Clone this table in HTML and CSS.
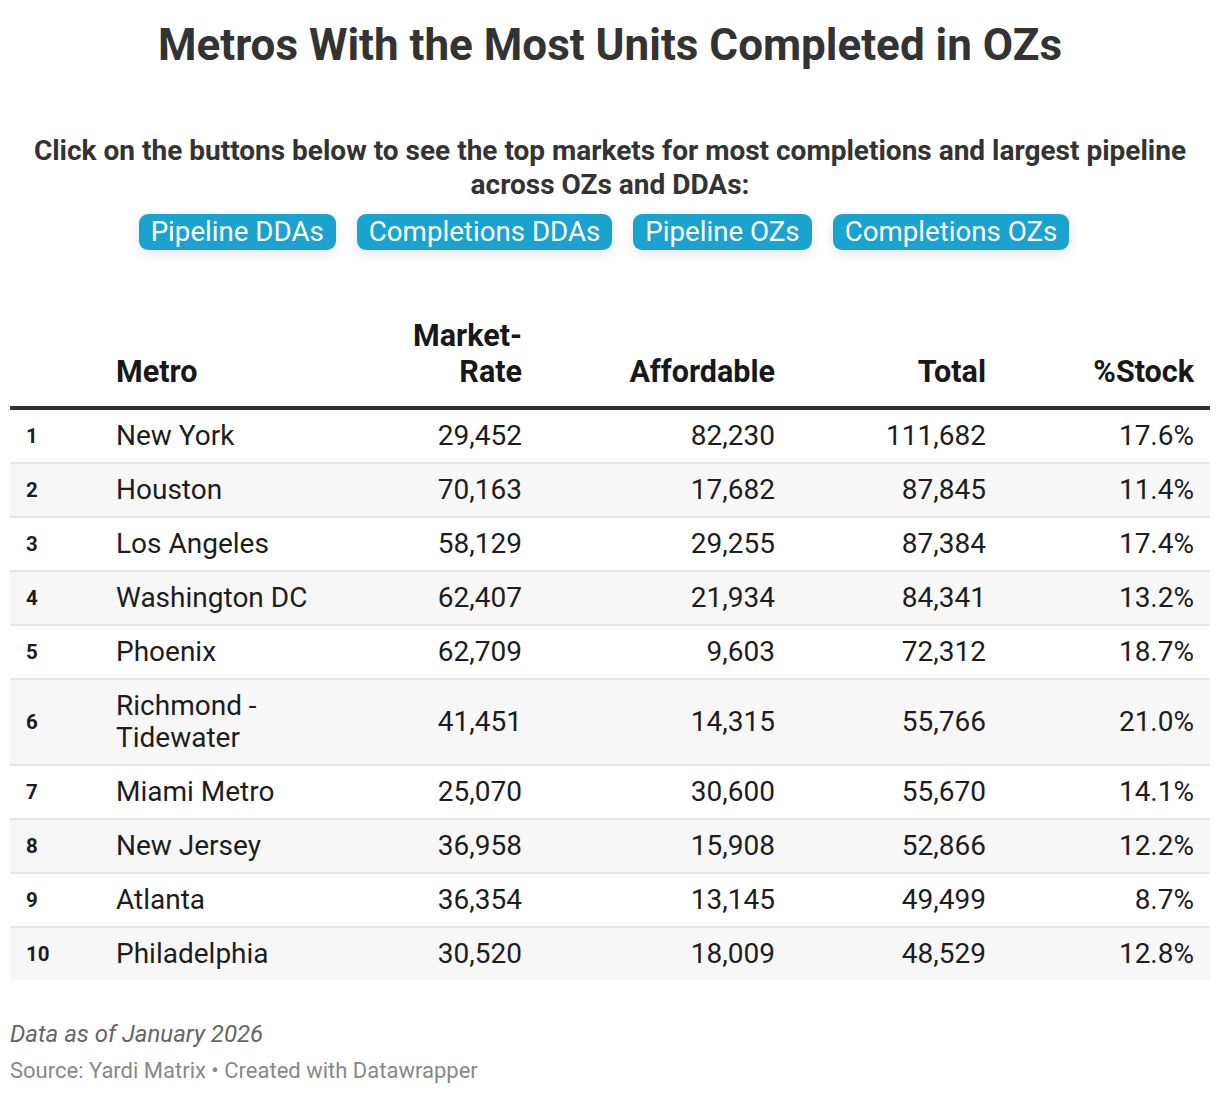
FILE: index.html
```html
<!DOCTYPE html>
<html>
<head>
<meta charset="utf-8">
<link rel="stylesheet" href="styles.css">
</head>
<body>
<div class="chart">
  <h1 class="title">Metros With the Most Units Completed in OZs</h1>
  <p class="desc">Click on the buttons below to see the top markets for most completions and largest pipeline across OZs and DDAs:</p>
  <div class="buttons">
    <span class="btn">Pipeline DDAs</span>
    <span class="btn">Completions DDAs</span>
    <span class="btn">Pipeline OZs</span>
    <span class="btn">Completions OZs</span>
  </div>
  <table class="tbl">
    <colgroup>
      <col class="c-rank"><col class="c-metro"><col class="c-mr"><col class="c-aff"><col class="c-tot"><col class="c-pct">
    </colgroup>
    <thead>
      <tr>
        <th></th>
        <th class="l">Metro</th>
        <th class="r">Market-Rate</th>
        <th class="r">Affordable</th>
        <th class="r">Total</th>
        <th class="r">%Stock</th>
      </tr>
    </thead>
    <tbody>
      <tr><td class="rank">1</td><td>New York</td><td class="r">29,452</td><td class="r">82,230</td><td class="r">111,682</td><td class="r">17.6%</td></tr>
      <tr><td class="rank">2</td><td>Houston</td><td class="r">70,163</td><td class="r">17,682</td><td class="r">87,845</td><td class="r">11.4%</td></tr>
      <tr><td class="rank">3</td><td>Los Angeles</td><td class="r">58,129</td><td class="r">29,255</td><td class="r">87,384</td><td class="r">17.4%</td></tr>
      <tr><td class="rank">4</td><td>Washington DC</td><td class="r">62,407</td><td class="r">21,934</td><td class="r">84,341</td><td class="r">13.2%</td></tr>
      <tr><td class="rank">5</td><td>Phoenix</td><td class="r">62,709</td><td class="r">9,603</td><td class="r">72,312</td><td class="r">18.7%</td></tr>
      <tr><td class="rank">6</td><td>Richmond - Tidewater</td><td class="r">41,451</td><td class="r">14,315</td><td class="r">55,766</td><td class="r">21.0%</td></tr>
      <tr><td class="rank">7</td><td>Miami Metro</td><td class="r">25,070</td><td class="r">30,600</td><td class="r">55,670</td><td class="r">14.1%</td></tr>
      <tr><td class="rank">8</td><td>New Jersey</td><td class="r">36,958</td><td class="r">15,908</td><td class="r">52,866</td><td class="r">12.2%</td></tr>
      <tr><td class="rank">9</td><td>Atlanta</td><td class="r">36,354</td><td class="r">13,145</td><td class="r">49,499</td><td class="r">8.7%</td></tr>
      <tr><td class="rank">10</td><td>Philadelphia</td><td class="r">30,520</td><td class="r">18,009</td><td class="r">48,529</td><td class="r">12.8%</td></tr>
    </tbody>
  </table>
  <div class="notes">Data as of January 2026</div>
  <div class="source">Source: Yardi Matrix • Created with Datawrapper</div>
</div>
</body>
</html>
```
FILE: styles.css
```css
* { box-sizing: border-box; }
body {
  margin: 0;
  background: #fff;
  font-family: Roboto, "Noto Sans", sans-serif;
  color: #181818;
}
.chart {
  padding: 20px 10px 0 10px;
}
.title {
  margin: 0;
  text-align: center;
  font-size: 44px;
  font-weight: 700;
  line-height: 50px;
  color: #333;
}
.desc {
  margin: 64px 0 0 0;
  text-align: center;
  font-size: 28px;
  font-weight: 700;
  line-height: 34px;
  color: #333;
  padding: 0 14px;
}
.buttons {
  display: flex;
  justify-content: center;
  gap: 21px;
  margin-top: 12px;
  padding-right: 12px;
}
.btn {
  background: #1ba3d0;
  color: #fff;
  font-size: 27.7px;
  line-height: 36px;
  height: 36px;
  padding: 0 12px;
  border-radius: 9px;
  box-shadow: 0 4px 12px rgba(0,0,0,0.10);
}
.tbl {
  width: 1200px;
  margin-top: 68px;
  border-collapse: collapse;
  table-layout: fixed;
  font-size: 28px;
}
.c-rank { width: 90px; }
.c-metro { width: 296px; }
.c-mr { width: 142px; }
.c-aff { width: 253px; }
.c-tot { width: 211px; }
.c-pct { width: 208px; }
.tbl th {
  font-weight: 700;
  font-size: 30.5px;
  line-height: 36px;
  vertical-align: bottom;
  padding: 0 16px 16px 16px;
  border-bottom: 4px solid #333;
  color: #181818;
}
.tbl th.l { text-align: left; }
.tbl th.r { text-align: right; }
.tbl td {
  padding: 10px 16px 10px 16px;
  line-height: 32px;
  border-bottom: 2px solid #e6e6e6;
  vertical-align: middle;
  color: #1d1d1d;
}
.tbl td.r { text-align: right; }
.tbl td.rank {
  font-size: 20.5px;
  font-weight: 700;
}
.tbl tbody tr:nth-child(even) td { background: #f7f7f7; }
.tbl tbody tr:last-child td { border-bottom: none; }
.notes {
  margin-top: 39px;
  font-style: italic;
  font-size: 24px;
  line-height: 30px;
  color: #666;
}
.source {
  margin-top: 7px;
  font-size: 22px;
  line-height: 30px;
  color: #888;
}
```
